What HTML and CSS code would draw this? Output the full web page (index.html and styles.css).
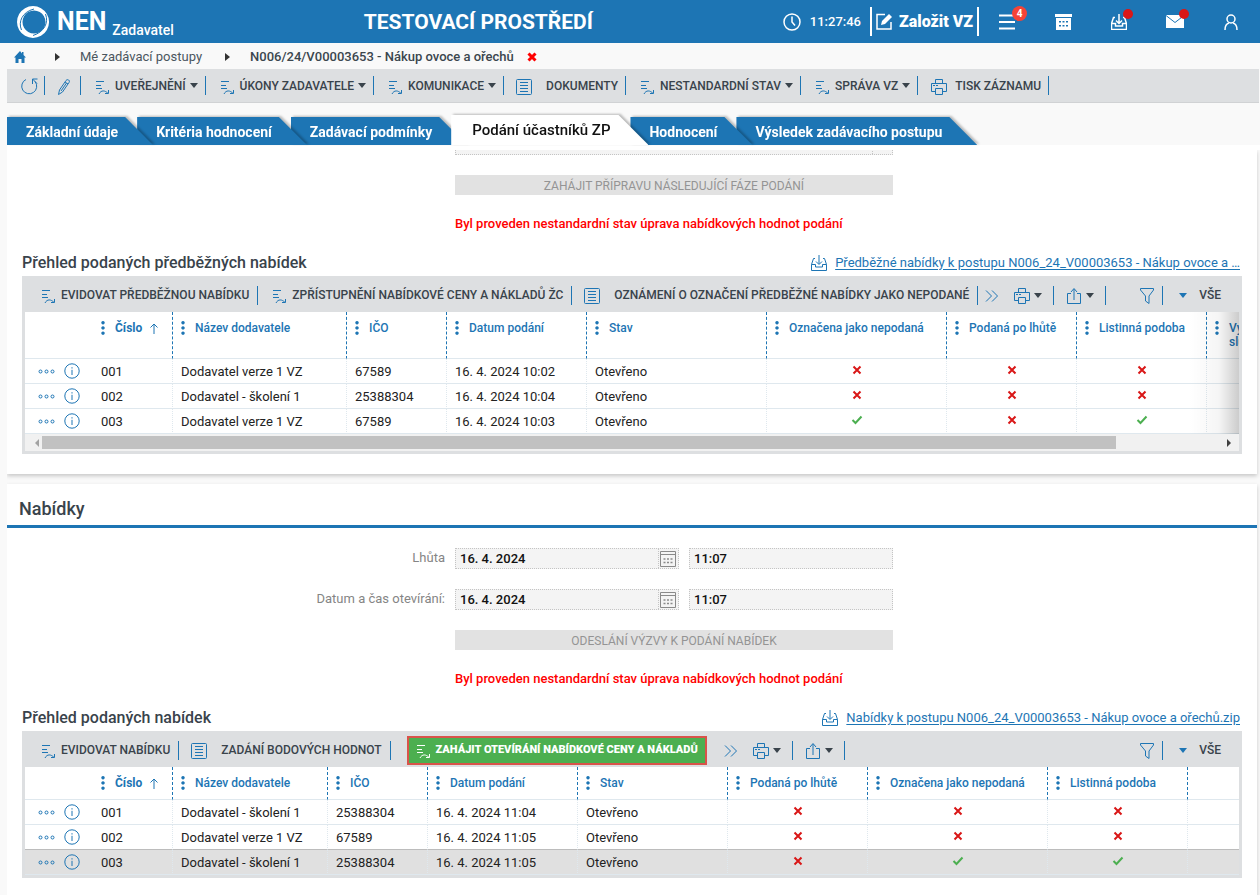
FILE: index.html
```html
<!DOCTYPE html>
<html lang="cs">
<head>
    <meta charset="UTF-8">
    <meta name="viewport" content="width=device-width, initial-scale=1.0">
    <title>NEN Zadavatel</title>
    <link rel="stylesheet" href="styles.css">
</head>
<body>
    <svg class="sprite" aria-hidden="true">
        <symbol id="i-action" viewBox="0 0 16 16"><path d="M1 2.500h8M1 6.500h5M1 9.500h6M4 15c2-4 6-4 9-.5M13.500 11v3.500H10"/></symbol>
        <symbol id="i-doc" viewBox="0 0 16 16"><rect x=".5" y=".5" width="15" height="15" rx="1"/><path d="M4 3.500h8M4 6.500h8M4 9.500h8M4 12.500h8"/></symbol>
        <symbol id="i-print" viewBox="0 0 16 16"><path d="M4.500 4.500v-4h7v4M4.500 12.500h-4v-8h15v8h-4M4.500 9.500h7v6h-7zM2 6.500h2M5 6.500h2"/></symbol>
        <symbol id="i-share" viewBox="0 0 14 16"><path d="M4 5.500H.5v10h13v-10H10M7 12V1M4 4l3-3.500L10 4"/></symbol>
        <symbol id="i-more" viewBox="0 0 14 12"><path d="M1 .5 6.500 6 1 11.500M7 .5 12.500 6 7 11.500"/></symbol>
        <symbol id="i-filter" viewBox="0 0 14 16"><path d="M.5.5h13v1.500L9 8v7.500L5.500 13V8L.5 2z"/></symbol>
        <symbol id="i-inbox" viewBox="0 0 16 16"><path d="M4 3.500H2.500L.5 9.500v6h15v-6l-2-6H12M.5 9.500h4v2.500h7V9.500h4M8 0v9M5 6.500 8 9.500l3-3"/></symbol>
        <symbol id="i-info" viewBox="0 0 16 16"><circle cx="8" cy="8" r="7.200"/><path d="M8 6.800V12M8 4.200v1.300"/></symbol>
        <symbol id="i-dots" viewBox="0 0 17 5"><circle cx="2.500" cy="2.500" r="1.500"/><circle cx="8.500" cy="2.500" r="1.500"/><circle cx="14.500" cy="2.500" r="1.500"/></symbol>
        <symbol id="i-menu" viewBox="0 0 4 14"><path class="solid" d="M2 0a1.700 1.700 0 1 0 .01 0zM2 5.200a1.700 1.700 0 1 0 .01 0zM2 10.400a1.700 1.700 0 1 0 .01 0z"/></symbol>
        <symbol id="i-cal" viewBox="0 0 16 16"><path d="M.5.5h15v15H.5zM.5 3.500h15"/><path d="M3.500 8h2M7 8h2M10.500 8h2M3.500 11.500h2M7 11.500h2M10.500 11.500h2" stroke-width="1.500"/></symbol>
        <symbol id="i-cross" viewBox="0 0 10 10"><path d="M1.500 1.500l7 7M8.500 1.500l-7 7"/></symbol>
        <symbol id="i-check" viewBox="0 0 12 10"><path d="M1.500 5 4.500 8 10.500 1.500"/></symbol>
        <symbol id="i-up" viewBox="0 0 8 11"><path d="M4 11V1M.5 4.500 4 1l3.500 3.500"/></symbol>
    </svg>

    <header class="header">
        <a class="brand" href="#">
            <svg class="brand-mark" viewBox="0 0 32 32"><path fill-rule="evenodd" d="M16 0a16 16 0 1 0 .01 0zM17 4.500a11.500 11.500 0 1 1-.01 0z"/><path class="brand-cut" d="M4.500 24C1 16 5 6 17 3M28.500 8C32 17 27 26 16 29.500"/></svg>
            <span class="brand-name">NEN</span><span class="brand-role">Zadavatel</span>
        </a>
        <h1 class="env">TESTOVACÍ PROSTŘEDÍ</h1>
        <div class="clock">
            <svg class="icon" viewBox="0 0 18 18" width="18" height="18"><circle cx="9" cy="9" r="8"/><path d="M9 3.500V9l3 3.500"/></svg>
            <span>11:27:46</span>
        </div>
        <button class="create" type="button">
            <svg class="icon" viewBox="0 0 17 17" width="17" height="17"><path d="M9 1.500H1v14.500h14V9"/><path class="solid" d="M5 12l1-4 7-7 3 3-7 7z"/></svg>
            Založit VZ
        </button>
        <nav class="header-nav">
            <button type="button" aria-label="Menu"><svg class="icon bold" viewBox="0 0 16 16" width="16" height="16"><path d="M0 1.500h16M0 8h16M0 14.500h16"/></svg><span class="badge">4</span></button>
            <button type="button" aria-label="Kalendář"><svg class="icon" viewBox="0 0 17 16" width="17" height="16"><path class="solid" fill-rule="evenodd" d="M0 0h17v3H0zM1 4h15v12H1zM4 7v1.600h2V7zM7.500 7v1.600h2V7zM11 7v1.600h2V7zM4 11v1.600h2V11zM7.500 11v1.600h2V11zM11 11v1.600h2V11z"/></svg></button>
            <button type="button" aria-label="Stažené"><svg class="icon" width="16" height="16"><use href="#i-inbox"/></svg><span class="dot"></span></button>
            <button type="button" aria-label="Zprávy"><svg class="icon" viewBox="0 0 18 13" width="18" height="13"><path class="solid" d="M0 0h18v13H0z"/><path class="fold" d="M0 .5l9 7 9-7"/></svg><span class="dot"></span></button>
            <button type="button" aria-label="Uživatel"><svg class="icon user" viewBox="0 0 14 16" width="14" height="16"><circle cx="7" cy="5" r="4"/><path d="M1 16c0-4 2-6.500 4-7M13 16c0-4-2-6.500-4-7"/></svg></button>
        </nav>
    </header>

    <nav class="breadcrumb">
        <a href="#" aria-label="Domů"><svg class="home" viewBox="0 0 12 12" width="12" height="12"><path d="M6 0 0 6.500h1.500V12h3V8h3v4h3V6.500H12L9.500 4V1h-1.500v1.500z"/></svg></a>
        <span class="arrow"></span>
        <a href="#">Mé zadávací postupy</a>
        <span class="arrow"></span>
        <strong>N006/24/V00003653 - Nákup ovoce a ořechů</strong>
        <button class="close" type="button" aria-label="Zavřít"><svg width="10" height="10"><use href="#i-cross"/></svg></button>
    </nav>

    <div class="toolbar main-toolbar">
        <button class="tool refresh" type="button" aria-label="Obnovit"><svg class="icon" viewBox="0 0 17 17" width="17" height="17"><path d="M5 1.500A7.500 7.500 0 1 0 14 3.500M16.500 1h-5v5M11.500 1l4.500 4.500"/></svg></button>
        <button class="tool edit" type="button" aria-label="Upravit"><svg class="icon" viewBox="0 0 12 16" width="12" height="16"><path d="M.5 15.500 1.500 11 8 1.500C9.500-.5 12.500 1.500 11 3.500L4.500 13zM7 3l3 2M8.500 4 3 12"/></svg></button>
        <button class="tool" type="button"><svg class="icon" width="16" height="16"><use href="#i-action"/></svg><span>UVEŘEJNĚNÍ</span><i class="caret"></i></button>
        <button class="tool" type="button"><svg class="icon" width="16" height="16"><use href="#i-action"/></svg><span>ÚKONY ZADAVATELE</span><i class="caret"></i></button>
        <button class="tool" type="button"><svg class="icon" width="16" height="16"><use href="#i-action"/></svg><span>KOMUNIKACE</span><i class="caret"></i></button>
        <button class="tool doc" type="button"><svg class="icon" width="16" height="16"><use href="#i-doc"/></svg><span>DOKUMENTY</span></button>
        <button class="tool" type="button"><svg class="icon" width="16" height="16"><use href="#i-action"/></svg><span>NESTANDARDNÍ STAV</span><i class="caret"></i></button>
        <button class="tool" type="button"><svg class="icon" width="16" height="16"><use href="#i-action"/></svg><span>SPRÁVA VZ</span><i class="caret"></i></button>
        <button class="tool print" type="button"><svg class="icon" width="16" height="16"><use href="#i-print"/></svg><span>TISK ZÁZNAMU</span></button>
    </div>

    <ul class="tabs">
        <li><a href="#">Základní údaje</a></li>
        <li><a href="#">Kritéria hodnocení</a></li>
        <li><a href="#">Zadávací podmínky</a></li>
        <li class="active"><a href="#">Podání účastníků ZP</a></li>
        <li><a href="#">Hodnocení</a></li>
        <li><a href="#">Výsledek zadávacího postupu</a></li>
    </ul>

    <main class="content">
        <section class="panel panel-first">
            <div class="form">
                <div class="field wide"><input type="text" aria-label="Datum" readonly><button type="button" aria-label="Vybrat datum"></button></div>
                <button class="submit" type="button" disabled>ZAHÁJIT PŘÍPRAVU NÁSLEDUJÍCÍ FÁZE PODÁNÍ</button>
                <p class="warning">Byl proveden nestandardní stav úprava nabídkových hodnot podání</p>
            </div>

            <div class="caption">
                <h3>Přehled podaných předběžných nabídek</h3>
                <a class="download cut" href="#"><svg class="icon" width="16" height="16"><use href="#i-inbox"/></svg><span>Předběžné nabídky k postupu N006_24_V00003653 - Nákup ovoce a …</span></a>
            </div>
            <div class="grid">
                <div class="toolbar">
                    <button class="tool" type="button"><svg class="icon" width="16" height="16"><use href="#i-action"/></svg><span>EVIDOVAT PŘEDBĚŽNOU NABÍDKU</span></button>
                    <button class="tool" type="button"><svg class="icon" width="16" height="16"><use href="#i-action"/></svg><span>ZPŘÍSTUPNĚNÍ NABÍDKOVÉ CENY A NÁKLADŮ ŽC</span></button>
                    <button class="tool doc" type="button"><svg class="icon" width="16" height="16"><use href="#i-doc"/></svg><span>OZNÁMENÍ O OZNAČENÍ PŘEDBĚŽNÉ NABÍDKY JAKO NEPODANÉ</span></button>
                    <button class="tool more" type="button" aria-label="Další"><svg class="icon" width="14" height="12"><use href="#i-more"/></svg></button>
                    <button class="tool" type="button" aria-label="Tisk"><svg class="icon" width="16" height="16"><use href="#i-print"/></svg><i class="caret"></i></button>
                    <button class="tool share" type="button" aria-label="Export"><svg class="icon" width="14" height="16"><use href="#i-share"/></svg><i class="caret"></i></button>
                    <button class="tool filter" type="button" aria-label="Filtr"><svg class="icon" width="14" height="16"><use href="#i-filter"/></svg></button>
                    <button class="view" type="button"><i class="caret"></i>VŠE</button>
                </div>
                <div class="table-wrap fade">
                    <table class="table-prelim">
                        <colgroup><col class="w-act"><col class="w80"><col class="w174"><col class="w100"><col class="w140"><col class="w180"><col class="w180"><col class="w130"><col class="w130"><col class="w180"></colgroup>
                        <thead>
                            <tr>
                                <th class="act"></th>
                                <th class="sorted"><div><svg width="4" height="14"><use href="#i-menu"/></svg><span>Číslo</span><svg class="icon" width="8" height="11"><use href="#i-up"/></svg></div></th>
                                <th><div><svg width="4" height="14"><use href="#i-menu"/></svg><span>Název dodavatele</span></div></th>
                                <th><div><svg width="4" height="14"><use href="#i-menu"/></svg><span>IČO</span></div></th>
                                <th><div><svg width="4" height="14"><use href="#i-menu"/></svg><span>Datum podání</span></div></th>
                                <th><div><svg width="4" height="14"><use href="#i-menu"/></svg><span>Stav</span></div></th>
                                <th><div><svg width="4" height="14"><use href="#i-menu"/></svg><span>Označena jako nepodaná</span></div></th>
                                <th><div><svg width="4" height="14"><use href="#i-menu"/></svg><span>Podaná po lhůtě</span></div></th>
                                <th><div><svg width="4" height="14"><use href="#i-menu"/></svg><span>Listinná podoba</span></div></th>
                                <th><div><svg width="4" height="14"><use href="#i-menu"/></svg><span>Vy<br>slu</span></div></th>
                            </tr>
                        </thead>
                        <tbody>
                            <tr>
                                <td class="act"><svg class="icon" width="17" height="5"><use href="#i-dots"/></svg><svg class="icon" width="16" height="16"><use href="#i-info"/></svg></td>
                                <td>001</td><td>Dodavatel verze 1 VZ</td><td>67589</td><td>16. 4. 2024 10:02</td><td>Otevřeno</td>
                                <td class="mark no"><svg width="10" height="10"><use href="#i-cross"/></svg></td><td class="mark no"><svg width="10" height="10"><use href="#i-cross"/></svg></td><td class="mark no"><svg width="10" height="10"><use href="#i-cross"/></svg></td><td></td>
                            </tr>
                            <tr>
                                <td class="act"><svg class="icon" width="17" height="5"><use href="#i-dots"/></svg><svg class="icon" width="16" height="16"><use href="#i-info"/></svg></td>
                                <td>002</td><td>Dodavatel - školení 1</td><td>25388304</td><td>16. 4. 2024 10:04</td><td>Otevřeno</td>
                                <td class="mark no"><svg width="10" height="10"><use href="#i-cross"/></svg></td><td class="mark no"><svg width="10" height="10"><use href="#i-cross"/></svg></td><td class="mark no"><svg width="10" height="10"><use href="#i-cross"/></svg></td><td></td>
                            </tr>
                            <tr>
                                <td class="act"><svg class="icon" width="17" height="5"><use href="#i-dots"/></svg><svg class="icon" width="16" height="16"><use href="#i-info"/></svg></td>
                                <td>003</td><td>Dodavatel verze 1 VZ</td><td>67589</td><td>16. 4. 2024 10:03</td><td>Otevřeno</td>
                                <td class="mark yes"><svg width="12" height="10"><use href="#i-check"/></svg></td><td class="mark no"><svg width="10" height="10"><use href="#i-cross"/></svg></td><td class="mark yes"><svg width="12" height="10"><use href="#i-check"/></svg></td><td></td>
                            </tr>
                        </tbody>
                    </table>
                </div>
                <div class="scrollbar"><i class="left"></i><div class="track"><div class="thumb"></div></div><i class="right"></i></div>
            </div>
        </section>

        <section class="panel panel-offers">
            <h2>Nabídky</h2>
            <div class="form">
                <label for="deadline">Lhůta</label>
                <div class="field"><input id="deadline" type="text" value="16. 4. 2024" readonly><button type="button" aria-label="Vybrat datum"><svg class="icon" width="16" height="16"><use href="#i-cal"/></svg></button></div>
                <div class="field"><input type="text" value="11:07" aria-label="Čas lhůty" readonly></div>
                <label for="opening">Datum a čas otevírání:</label>
                <div class="field"><input id="opening" type="text" value="16. 4. 2024" readonly><button type="button" aria-label="Vybrat datum"><svg class="icon" width="16" height="16"><use href="#i-cal"/></svg></button></div>
                <div class="field"><input type="text" value="11:07" aria-label="Čas otevírání" readonly></div>
                <button class="submit" type="button" disabled>ODESLÁNÍ VÝZVY K PODÁNÍ NABÍDEK</button>
                <p class="warning">Byl proveden nestandardní stav úprava nabídkových hodnot podání</p>
            </div>

            <div class="caption">
                <h3>Přehled podaných nabídek</h3>
                <a class="download" href="#"><svg class="icon" width="16" height="16"><use href="#i-inbox"/></svg><span>Nabídky k postupu N006_24_V00003653 - Nákup ovoce a ořechů.zip</span></a>
            </div>
            <div class="grid">
                <div class="toolbar">
                    <button class="tool" type="button"><svg class="icon" width="16" height="16"><use href="#i-action"/></svg><span>EVIDOVAT NABÍDKU</span></button>
                    <button class="tool doc" type="button"><svg class="icon" width="16" height="16"><use href="#i-doc"/></svg><span>ZADÁNÍ BODOVÝCH HODNOT</span></button>
                    <button class="tool highlight" type="button"><svg class="icon" width="16" height="16"><use href="#i-action"/></svg><span>ZAHÁJIT OTEVÍRÁNÍ NABÍDKOVÉ CENY A NÁKLADŮ</span></button>
                    <button class="tool more" type="button" aria-label="Další"><svg class="icon" width="14" height="12"><use href="#i-more"/></svg></button>
                    <button class="tool" type="button" aria-label="Tisk"><svg class="icon" width="16" height="16"><use href="#i-print"/></svg><i class="caret"></i></button>
                    <button class="tool share" type="button" aria-label="Export"><svg class="icon" width="14" height="16"><use href="#i-share"/></svg><i class="caret"></i></button>
                    <button class="tool filter" type="button" aria-label="Filtr"><svg class="icon" width="14" height="16"><use href="#i-filter"/></svg></button>
                    <button class="view" type="button"><i class="caret"></i>VŠE</button>
                </div>
                <div class="table-wrap">
                    <table class="table-offers">
                        <colgroup><col class="w-act"><col class="w80"><col class="w155"><col class="w100"><col class="w150"><col class="w150"><col class="w140"><col class="w180"><col class="w140"><col></colgroup>
                        <thead>
                            <tr>
                                <th class="act"></th>
                                <th class="sorted"><div><svg width="4" height="14"><use href="#i-menu"/></svg><span>Číslo</span><svg class="icon" width="8" height="11"><use href="#i-up"/></svg></div></th>
                                <th><div><svg width="4" height="14"><use href="#i-menu"/></svg><span>Název dodavatele</span></div></th>
                                <th><div><svg width="4" height="14"><use href="#i-menu"/></svg><span>IČO</span></div></th>
                                <th><div><svg width="4" height="14"><use href="#i-menu"/></svg><span>Datum podání</span></div></th>
                                <th><div><svg width="4" height="14"><use href="#i-menu"/></svg><span>Stav</span></div></th>
                                <th><div><svg width="4" height="14"><use href="#i-menu"/></svg><span>Podaná po lhůtě</span></div></th>
                                <th><div><svg width="4" height="14"><use href="#i-menu"/></svg><span>Označena jako nepodaná</span></div></th>
                                <th><div><svg width="4" height="14"><use href="#i-menu"/></svg><span>Listinná podoba</span></div></th>
                                <th></th>
                            </tr>
                        </thead>
                        <tbody>
                            <tr>
                                <td class="act"><svg class="icon" width="17" height="5"><use href="#i-dots"/></svg><svg class="icon" width="16" height="16"><use href="#i-info"/></svg></td>
                                <td>001</td><td>Dodavatel - školení 1</td><td>25388304</td><td>16. 4. 2024 11:04</td><td>Otevřeno</td>
                                <td class="mark no"><svg width="10" height="10"><use href="#i-cross"/></svg></td><td class="mark no"><svg width="10" height="10"><use href="#i-cross"/></svg></td><td class="mark no"><svg width="10" height="10"><use href="#i-cross"/></svg></td><td></td>
                            </tr>
                            <tr class="before-selected">
                                <td class="act"><svg class="icon" width="17" height="5"><use href="#i-dots"/></svg><svg class="icon" width="16" height="16"><use href="#i-info"/></svg></td>
                                <td>002</td><td>Dodavatel verze 1 VZ</td><td>67589</td><td>16. 4. 2024 11:05</td><td>Otevřeno</td>
                                <td class="mark no"><svg width="10" height="10"><use href="#i-cross"/></svg></td><td class="mark no"><svg width="10" height="10"><use href="#i-cross"/></svg></td><td class="mark no"><svg width="10" height="10"><use href="#i-cross"/></svg></td><td></td>
                            </tr>
                            <tr class="selected">
                                <td class="act"><svg class="icon" width="17" height="5"><use href="#i-dots"/></svg><svg class="icon" width="16" height="16"><use href="#i-info"/></svg></td>
                                <td>003</td><td>Dodavatel - školení 1</td><td>25388304</td><td>16. 4. 2024 11:05</td><td>Otevřeno</td>
                                <td class="mark no"><svg width="10" height="10"><use href="#i-cross"/></svg></td><td class="mark yes"><svg width="12" height="10"><use href="#i-check"/></svg></td><td class="mark yes"><svg width="12" height="10"><use href="#i-check"/></svg></td><td></td>
                            </tr>
                        </tbody>
                    </table>
                </div>
            </div>
        </section>
    </main>
</body>
</html>
```
FILE: styles.css
```css
* { box-sizing: border-box; }
body {
    margin: 0;
    height: 100vh;
    overflow: hidden;
    display: flex;
    flex-direction: column;
    background: #f9f9f9;
    color: #222;
    font-family: Roboto, "Open Sans", sans-serif;
    font-size: 13px;
    line-height: 16px;
}
h1, h2, h3, p, ul { margin: 0; padding: 0; }
button, input { font: inherit; color: inherit; }
button {
    border: none;
    background: none;
    padding: 0;
    cursor: pointer;
    white-space: nowrap;
}
svg { display: block; flex: none; }
a { color: inherit; text-decoration: none; }
.sprite { position: absolute; width: 0; height: 0; }
.icon { fill: none; stroke: #1d75b4; stroke-width: 1; }
.solid { fill: currentColor; stroke: none; }

/* header */
.header {
    display: flex;
    align-items: center;
    flex: none;
    height: 43px;
    padding-right: 1px;
    background: #1d75b4;
    color: #fff;
}
.header .icon { stroke: #fff; stroke-width: 1.5; }
.header .solid { stroke: none; }
.brand { display: flex; align-items: center; padding-left: 17px; }
.brand-mark { width: 32px; height: 32px; fill: #fff; }
.brand-cut { fill: none; stroke: #1d75b4; stroke-width: 1; }
.brand-name { margin-left: 8px; font-size: 25px; font-weight: 700; }
.brand-role { align-self: flex-end; margin: 17px 0 0 6px; font-size: 14px; font-weight: 500; }
.env { flex: 1; text-align: center; font-size: 21px; font-weight: 700; }
.clock { display: flex; align-items: center; gap: 9px; margin-right: 9px; font-weight: 500; }
.create {
    display: flex;
    align-items: center;
    gap: 6px;
    height: 29px;
    padding: 0 4px;
    border-left: 2px solid #fff;
    border-right: 2px solid #fff;
    font-size: 16px;
    font-weight: 900;
}
.header-nav { display: flex; }
.header-nav button {
    position: relative;
    display: flex;
    align-items: center;
    justify-content: center;
    width: 56px;
    height: 43px;
}
.header .bold { stroke-width: 2; }
.header .fold { fill: none; stroke: #1d75b4; stroke-width: 1; }
.badge {
    position: absolute;
    top: 6px;
    left: 33px;
    width: 15px;
    height: 15px;
    border-radius: 50%;
    background: #f44336;
    font-size: 10px;
    line-height: 15px;
    font-weight: 700;
    text-align: center;
}
.dot {
    position: absolute;
    top: 9px;
    left: 32px;
    width: 10px;
    height: 10px;
    border-radius: 50%;
    background: #d91717;
}

/* breadcrumb */
.breadcrumb {
    display: flex;
    align-items: center;
    flex: none;
    height: 26px;
    padding: 1px 0 0 14px;
    color: #4b565e;
}
.breadcrumb strong { font-weight: 500; color: #3b464e; }
.home { fill: #1d75b4; }
.arrow {
    margin: 0 20px 0 23px;
    border: 4px solid transparent;
    border-left: 5px solid #333;
    border-right: none;
}
.breadcrumb a:first-child + .arrow { margin-left: 29px; }
.close { margin-left: 13px; stroke: #f00; stroke-width: 3; }

/* toolbars */
.toolbar { display: flex; align-items: center; background: #dddfe1; }
.main-toolbar {
    flex: none;
    height: 34px;
    margin: 0 1px 0 7px;
    border-bottom: 1px solid #d0d2d4;
}
.tool {
    display: flex;
    align-items: center;
    gap: 4px;
    height: 19px;
    padding: 0 7px 0 14px;
    border-right: 1px solid #1d75b4;
    color: #39434b;
    font-size: 12px;
    font-weight: 500;
}
.tool .icon { margin-top: 2px; }
.refresh { padding-right: 6px; }
.edit { padding: 0 10px 0 13px; }
.doc { padding-left: 12px; gap: 14px; }
.print { padding-left: 13px; gap: 8px; }
.grid .tool { padding-right: 8px; }
.grid .more { padding: 0 1px 0 7px; border-right: none; }
.grid .more + .tool, .grid .share { padding-right: 11px; }
.share { padding-left: 13px; gap: 5px; }
.filter { margin-left: auto; }
.caret {
    border: 4px solid transparent;
    border-top: 5px solid #39434b;
    border-bottom: none;
}
.view {
    display: flex;
    align-items: center;
    gap: 12px;
    padding: 0 18px 0 16px;
    color: #39434b;
    font-size: 12px;
    font-weight: 500;
}
.view .caret { border-top-color: #1d75b4; }
.grid .highlight {
    height: 29px;
    margin: 0 10px 0 16px;
    padding: 0 7px;
    border: 2px solid #d9534a;
    background: #4caf50;
    color: #fff;
    font-size: 11px;
    font-weight: 900;
}
.highlight .icon { stroke: #fff; }

/* tabs */
.tabs {
    display: flex;
    align-items: flex-end;
    flex: none;
    height: 42px;
    padding-left: 7px;
    list-style: none;
    isolation: isolate;
}
.tabs li {
    margin-right: -16px;
    filter: drop-shadow(2px -1px 1px rgba(0, 0, 0, .25));
}
.tabs li:nth-child(1) { z-index: 5; }
.tabs li:nth-child(2) { z-index: 4; }
.tabs li:nth-child(3) { z-index: 3; }
.tabs li:nth-child(5) { z-index: 2; }
.tabs li:nth-child(6) { z-index: 1; }
.tabs a {
    display: block;
    height: 28px;
    padding: 0 35px 0 19px;
    background: #1d75b4;
    clip-path: polygon(0 0, calc(100% - 28px) 0, 100% 100%, 0 100%);
    color: #fff;
    font-size: 14px;
    font-weight: 700;
    line-height: 30px;
    white-space: nowrap;
}
.tabs .active { z-index: 6; margin-right: -18px; }
.tabs .active a {
    height: 30px;
    padding: 0 38px 0 21px;
    background: #fff;
    clip-path: polygon(0 0, calc(100% - 30px) 0, 100% 100%, 0 100%);
    color: #111;
    font-size: 15px;
    font-weight: 500;
}

/* content */
.content {
    flex: 1;
    min-height: 0;
    overflow: hidden;
    margin-left: 7px;
    border-top: 5px solid #fff;
}
.panel {
    margin: 0 3px 10px 0;
    background: #fff;
    box-shadow: 0 2px 4px rgba(0, 0, 0, .2);
}
.panel-first { display: flow-root; padding-bottom: 20px; }
.panel-offers { padding-bottom: 40px; }
.panel h2 {
    padding: 13px 12px 4px;
    border-bottom: 3px solid #1d75b4;
    color: #39434b;
    font-size: 18px;
    font-weight: 500;
    line-height: 24px;
}
.form {
    display: grid;
    grid-template-columns: 438px 224px 204px;
    column-gap: 10px;
    row-gap: 20px;
    padding-top: 20px;
}
.panel-first .form { padding-top: 0; margin-top: -16px; }
.form label { text-align: right; line-height: 19px; color: #858585; }
.field {
    display: flex;
    height: 21px;
    border: 1px dotted #c4c4c4;
    background: #f4f4f4;
}
.wide { grid-column: 2 / 4; }
.field input {
    flex: 1;
    min-width: 0;
    padding: 0 4px;
    border: none;
    outline: none;
    background: none;
    color: #111;
    font-weight: 500;
}
.field button { width: 20px; padding-left: 1px; border-left: 1px dotted #c4c4c4; }
.field .icon { stroke: #8a8a8a; }
.submit {
    grid-column: 2 / 4;
    height: 20px;
    padding-top: 2px;
    background: #e2e2e2;
    color: #949494;
    font-size: 12px;
}
.warning { grid-column: 2 / 4; color: #f00; font-weight: 500; line-height: 18px; }
.caption {
    display: flex;
    align-items: center;
    justify-content: space-between;
    height: 30px;
    margin: 13px 15px 0;
    padding-top: 3px;
}
.caption h3 { color: #39434b; font-size: 16px; font-weight: 500; }
.download { display: flex; align-items: center; gap: 8px; margin-right: 2px; color: #1d75b4; white-space: nowrap; }
.download span { text-decoration: underline; text-underline-offset: 2px; }

/* data grids */
.grid { margin: 0 15px; padding: 0 3px 3px; background: #dddfe1; }
.grid .toolbar { height: 36px; padding: 2px 0 0 2px; }
.table-wrap { position: relative; overflow: hidden; background: #fff; }
.fade::after {
    content: "";
    position: absolute;
    top: 0;
    right: 0;
    bottom: 0;
    width: 50px;
    background: linear-gradient(to right, rgba(0, 0, 0, 0), rgba(0, 0, 0, .04) 60%, rgba(0, 0, 0, .2));
}
table { border-collapse: separate; border-spacing: 0; table-layout: fixed; width: 100%; }
.table-prelim { width: 1362px; }
.w-act { width: 68px; }
.w80 { width: 80px; }
.w100 { width: 100px; }
.w130 { width: 130px; }
.w140 { width: 140px; }
.w150 { width: 150px; }
.w155 { width: 155px; }
.w174 { width: 174px; }
.w180 { width: 180px; }
th {
    height: 33px;
    padding: 9px 0 0 8px;
    border-right: 1px dashed #1d75b4;
    border-bottom: 1px solid #dfe8ee;
    color: #1d75b4;
    font-size: 12px;
    font-weight: 500;
    line-height: 14px;
    text-align: left;
    vertical-align: top;
    white-space: nowrap;
}
.table-prelim th { height: 47px; }
th div { display: flex; align-items: flex-start; gap: 10px; }
th svg { fill: #1d75b4; color: #1d75b4; }
th .icon { margin: 2px 0 0 -2px; }
.sorted span { font-weight: 700; }
td {
    height: 25px;
    padding: 1px 8px 0;
    border-right: 1px dotted #dfe8ee;
    border-bottom: 1px solid #dfe8ee;
    white-space: nowrap;
}
th:last-child, td:last-child, .act { border-right: none; }
td.act { padding: 0 0 0 13px; }
td.act svg { display: inline-block; vertical-align: middle; }
td.act svg + svg { margin-left: 9px; }
td.mark { padding: 0 0 3px; line-height: 14px; text-align: center; }
.mark svg { display: inline-block; fill: none; stroke-width: 2; vertical-align: middle; }
.no { stroke: #d91717; }
.yes { stroke: #4caf50; }
.before-selected td { border-bottom-color: #bcbcbc; }
.selected { background: #e0e0e0; }

.scrollbar {
    display: flex;
    align-items: center;
    height: 17px;
    background: #f1f1f1;
}
.scrollbar i { width: 17px; }
.scrollbar i::before {
    content: "";
    display: block;
    width: 4px;
    margin: 0 auto;
    border: 4px solid transparent;
}
.scrollbar .left::before { margin-left: 6px; border-left: none; border-right-color: #a3a3a3; }
.scrollbar .right::before { border-right: none; border-left-color: #404040; }
.track { flex: 1; }
.thumb { width: 91%; height: 13px; background: #c1c1c1; }
```
